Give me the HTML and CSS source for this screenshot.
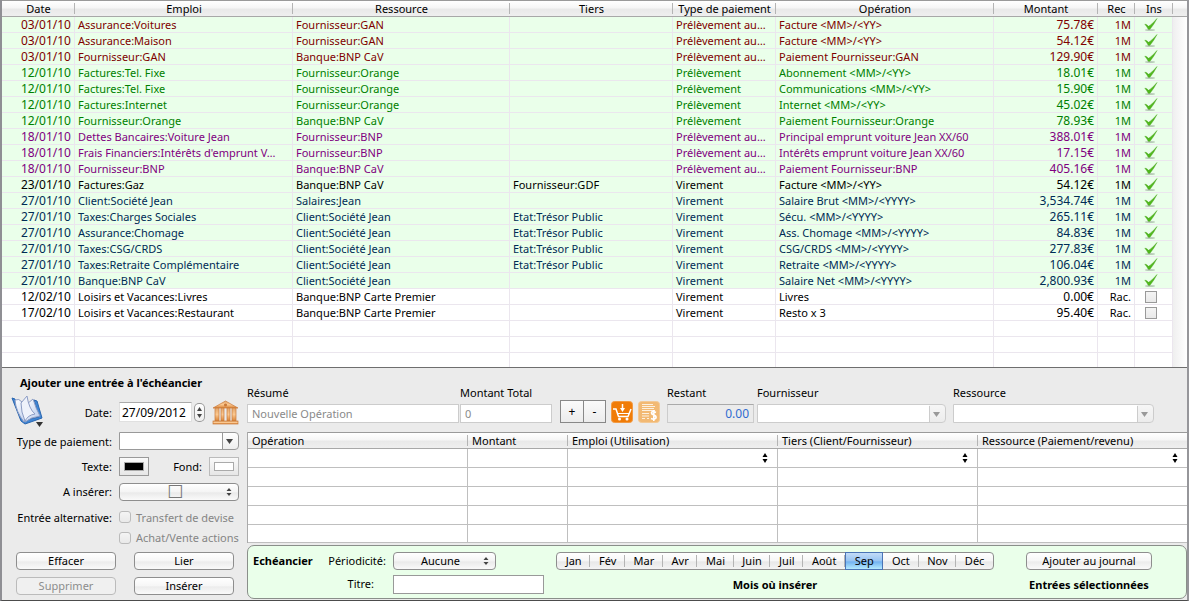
FILE: index.html
```html
<!DOCTYPE html>
<html lang="fr">
<head>
    <meta charset="UTF-8">
    <meta name="viewport" content="width=device-width, initial-scale=1.0">
    <title>Echéancier</title>
    <link rel="stylesheet" href="styles.css">
</head>
<body>

    <main class="fenetre">

        <!-- Liste des échéances -->
        <div class="liste">
            <table class="echeances">
                <colgroup>
                    <col class="col-date">
                    <col class="col-emploi">
                    <col class="col-ressource">
                    <col class="col-tiers">
                    <col class="col-type">
                    <col>
                    <col class="col-montant">
                    <col class="col-rec">
                    <col class="col-ins">
                    <col class="col-fin">
                </colgroup>
                <thead>
                    <tr>
                        <th>Date</th>
                        <th>Emploi</th>
                        <th>Ressource</th>
                        <th>Tiers</th>
                        <th>Type de paiement</th>
                        <th>Opération</th>
                        <th>Montant</th>
                        <th>Rec</th>
                        <th>Ins</th>
                        <th></th>
                    </tr>
                </thead>
                <tbody id="lignes"></tbody>
            </table>
        </div>

        <section class="panneau">

            <!-- Formulaire de gauche -->
            <form class="saisie">
                <h2>Ajouter une entrée à l'échéancier</h2>

                <div class="champ champ-date">
                    <div class="etiquette avec-livre">
                        <button type="button" class="icone" aria-label="Modèles">
                            <svg width="34" height="34" viewBox="0 0 34 34">
                                <defs>
                                    <linearGradient id="page" x1="0" y1="0" x2="1" y2="1">
                                        <stop offset="0" stop-color="#ffffff"/>
                                        <stop offset="1" stop-color="#b4c8ec"/>
                                    </linearGradient>
                                </defs>
                                <path d="M1 3 L4 4 L14 25 L28 22 L23 5 L26 6 L31 23 L14 29 L10 26 Z" fill="#3f86d4" stroke="#2a66b0" stroke-width="1"/>
                                <path d="M4 5 Q8 3 11 7 L19 23 Q15 23 13 27 Q5 17 4 5 Z" fill="url(#page)" stroke="#8c9cc4" stroke-width="1"/>
                                <path d="M16 9 L22 4 Q25 14 29 21 Q20 22 14 27 Z" fill="url(#page)" stroke="#8c9cc4" stroke-width="1"/>
                                <path d="M10 8 L16 1 Q18 14 24 19 Q17 20 14 26 Q10 17 10 8 Z" fill="#eef2fb" stroke="#8c9cc4" stroke-width="1"/>
                                <path d="M25 27 h7 l-3.500 5 z" fill="#333"/>
                            </svg>
                        </button>
                        <label for="date">Date:</label>
                    </div>
                    <input type="text" id="date" class="date" value="27/09/2012">
                    <button type="button" class="pas" aria-label="Changer la date">
                        <svg width="11" height="19" viewBox="0 0 11 19"><path d="M5.500 4 L8 8 H3 Z M5.500 15 L8 11 H3 Z" fill="#444"/></svg>
                    </button>
                    <button type="button" class="icone banque" aria-label="Banque">
                        <svg width="27" height="25" viewBox="0 0 27 25">
                            <defs>
                                <linearGradient id="pierre" x1="0" y1="0" x2="0" y2="1">
                                    <stop offset="0" stop-color="#e2a56a"/>
                                    <stop offset="0.500" stop-color="#fbc890"/>
                                    <stop offset="1" stop-color="#d98336"/>
                                </linearGradient>
                            </defs>
                            <g fill="url(#pierre)" stroke="#c9793a" stroke-width="0.700">
                                <path d="M1 8 L13.500 1 L26 8 Z"/>
                                <rect x="3" y="8" width="4" height="13"/>
                                <rect x="9" y="8" width="3" height="13"/>
                                <rect x="15" y="8" width="3" height="13"/>
                                <rect x="20" y="8" width="4" height="13"/>
                                <rect x="1" y="21" width="25" height="3"/>
                            </g>
                            <circle cx="13.500" cy="5" r="1.500" fill="#c9793a"/>
                        </svg>
                    </button>
                </div>

                <div class="champ champ-type">
                    <label class="etiquette" for="type">Type de paiement:</label>
                    <select id="type" class="combo"><option></option></select>
                </div>

                <div class="champ champ-couleur">
                    <label class="etiquette" for="texte">Texte:</label>
                    <input type="color" id="texte" class="couleur" value="#000000">
                    <label class="fond" for="fond">Fond:</label>
                    <input type="color" id="fond" class="couleur couleur-pale" value="#ffffff">
                </div>

                <div class="champ champ-inserer">
                    <label class="etiquette" for="inserer">A insérer:</label>
                    <select id="inserer" class="liste-choix case-choix"><option>☐</option></select>
                </div>

                <div class="champ champ-option">
                    <span class="etiquette">Entrée alternative:</span>
                    <input type="checkbox" id="devise" class="case" disabled>
                    <label class="inactif" for="devise">Transfert de devise</label>
                </div>

                <div class="champ champ-option2">
                    <span class="etiquette"></span>
                    <input type="checkbox" id="actions" class="case" disabled>
                    <label class="inactif" for="actions">Achat/Vente actions</label>
                </div>

                <div class="boutons">
                    <button type="button" class="bouton">Effacer</button>
                    <button type="button" class="bouton">Lier</button>
                    <button type="button" class="bouton" disabled>Supprimer</button>
                    <button type="button" class="bouton">Insérer</button>
                </div>
            </form>

            <!-- Détail de l'opération -->
            <div class="detail">
                <div class="entete">
                    <div class="bloc bloc-resume">
                        <label for="resume">Résumé</label>
                        <input type="text" id="resume" class="texte" placeholder="Nouvelle Opération">
                    </div>
                    <div class="bloc bloc-total">
                        <label for="total">Montant Total</label>
                        <input type="text" id="total" class="texte" placeholder="0">
                    </div>
                    <div class="plus-moins">
                        <button type="button">+</button>
                        <button type="button">-</button>
                    </div>
                    <div class="raccourcis">
                        <button type="button" class="icone" aria-label="Achat">
                            <svg width="22" height="22" viewBox="0 0 22 22">
                                <rect x="0.500" y="0.500" width="21" height="21" rx="3" fill="#f07c08" stroke="#f29a42"/>
                                <path d="M2 8 H5 L7.500 15.500 H17 L20 8" fill="none" stroke="#fff" stroke-width="1.500"/>
                                <path d="M6.500 12.500 H18" stroke="#fff" stroke-width="1"/>
                                <path d="M11.500 3 V8" stroke="#fff" stroke-width="1.500"/>
                                <path d="M9 7 H14 L11.500 11 Z" fill="#fff"/>
                                <circle cx="8.500" cy="18" r="1.500" fill="#fff"/>
                                <circle cx="16" cy="18" r="1.500" fill="#fff"/>
                            </svg>
                        </button>
                        <button type="button" class="icone" aria-label="Facture" disabled>
                            <svg width="22" height="22" viewBox="0 0 22 22">
                                <rect x="0.500" y="0.500" width="21" height="21" rx="3" fill="#f2b973" stroke="#f3c995"/>
                                <path d="M4 3.500 H15 M4 5.500 H17 M4 7.500 H16 M4 9.500 H17 M4 12.500 H11 M4 15 H11 M4 17.500 H7 M9 17.500 H11" stroke="#fdf0de" stroke-width="1"/>
                                <path d="M18 11.500 Q14 9.500 13.500 11.500 Q13.500 13.500 16 14 Q18.500 15 18 17 Q16.500 19 13 17.500 M15.800 9 V20" fill="none" stroke="#fff" stroke-width="1.600"/>
                            </svg>
                        </button>
                    </div>
                    <div class="bloc bloc-restant">
                        <label for="restant">Restant</label>
                        <input type="text" id="restant" class="texte restant" value="0.00" readonly>
                    </div>
                    <div class="bloc bloc-fournisseur">
                        <label for="fournisseur">Fournisseur</label>
                        <select id="fournisseur" class="combo" disabled><option></option></select>
                    </div>
                    <div class="bloc bloc-ressource">
                        <label for="ressource">Ressource</label>
                        <select id="ressource" class="combo" disabled><option></option></select>
                    </div>
                </div>

                <table class="operations">
                    <colgroup>
                        <col class="op-nom">
                        <col class="op-montant">
                        <col>
                        <col class="op-tiers">
                        <col class="op-ressource">
                    </colgroup>
                    <thead>
                        <tr>
                            <th>Opération</th>
                            <th>Montant</th>
                            <th>Emploi (Utilisation)</th>
                            <th>Tiers (Client/Fournisseur)</th>
                            <th>Ressource (Paiement/revenu)</th>
                        </tr>
                    </thead>
                    <tbody>
                        <tr>
                            <td></td>
                            <td></td>
                            <td><select class="cellule" aria-label="Emploi"><option></option></select></td>
                            <td><select class="cellule" aria-label="Tiers"><option></option></select></td>
                            <td><select class="cellule" aria-label="Ressource"><option></option></select></td>
                        </tr>
                        <tr><td></td><td></td><td></td><td></td><td></td></tr>
                        <tr><td></td><td></td><td></td><td></td><td></td></tr>
                        <tr><td></td><td></td><td></td><td></td><td></td></tr>
                        <tr><td></td><td></td><td></td><td></td><td></td></tr>
                    </tbody>
                </table>

                <!-- Périodicité et mois -->
                <div class="planning">
                    <h3>Echéancier</h3>
                    <div class="periode">
                        <label for="periodicite">Périodicité:</label>
                        <select id="periodicite" class="liste-choix"><option>Aucune</option></select>
                        <label class="label-titre" for="titre">Titre:</label>
                        <input type="text" id="titre" class="texte titre">
                    </div>
                    <div class="groupe-mois">
                        <div class="mois" id="mois"></div>
                        <strong>Mois où insérer</strong>
                    </div>
                    <div class="journal">
                        <button type="button" class="bouton">Ajouter au journal</button>
                        <strong>Entrées sélectionnées</strong>
                    </div>
                </div>
            </div>
        </section>
    </main>

    <script>
        // date, emploi, ressource, tiers, type, opération, montant, récurrence, couleur
        const echeances = [
            ['03/01/10', 'Assurance:Voitures', 'Fournisseur:GAN', '', 'Prélèvement au…', 'Facture <MM>/<YY>', '75.78€', '1M', 'rouge'],
            ['03/01/10', 'Assurance:Maison', 'Fournisseur:GAN', '', 'Prélèvement au…', 'Facture <MM>/<YY>', '54.12€', '1M', 'rouge'],
            ['03/01/10', 'Fournisseur:GAN', 'Banque:BNP CaV', '', 'Prélèvement au…', 'Paiement Fournisseur:GAN', '129.90€', '1M', 'rouge'],
            ['12/01/10', 'Factures:Tel. Fixe', 'Fournisseur:Orange', '', 'Prélèvement', 'Abonnement <MM>/<YY>', '18.01€', '1M', 'vert'],
            ['12/01/10', 'Factures:Tel. Fixe', 'Fournisseur:Orange', '', 'Prélèvement', 'Communications <MM>/<YY>', '15.90€', '1M', 'vert'],
            ['12/01/10', 'Factures:Internet', 'Fournisseur:Orange', '', 'Prélèvement', 'Internet <MM>/<YY>', '45.02€', '1M', 'vert'],
            ['12/01/10', 'Fournisseur:Orange', 'Banque:BNP CaV', '', 'Prélèvement', 'Paiement Fournisseur:Orange', '78.93€', '1M', 'vert'],
            ['18/01/10', 'Dettes Bancaires:Voiture Jean', 'Fournisseur:BNP', '', 'Prélèvement au…', 'Principal emprunt voiture Jean XX/60', '388.01€', '1M', 'violet'],
            ['18/01/10', "Frais Financiers:Intérêts d'emprunt V…", 'Fournisseur:BNP', '', 'Prélèvement au…', 'Intérêts emprunt voiture Jean XX/60', '17.15€', '1M', 'violet'],
            ['18/01/10', 'Fournisseur:BNP', 'Banque:BNP CaV', '', 'Prélèvement au…', 'Paiement Fournisseur:BNP', '405.16€', '1M', 'violet'],
            ['23/01/10', 'Factures:Gaz', 'Banque:BNP CaV', 'Fournisseur:GDF', 'Virement', 'Facture <MM>/<YY>', '54.12€', '1M', 'noir'],
            ['27/01/10', 'Client:Société Jean', 'Salaires:Jean', '', 'Virement', 'Salaire Brut <MM>/<YYYY>', '3,534.74€', '1M', 'bleu'],
            ['27/01/10', 'Taxes:Charges Sociales', 'Client:Société Jean', 'Etat:Trésor Public', 'Virement', 'Sécu. <MM>/<YYYY>', '265.11€', '1M', 'bleu'],
            ['27/01/10', 'Assurance:Chomage', 'Client:Société Jean', 'Etat:Trésor Public', 'Virement', 'Ass. Chomage <MM>/<YYYY>', '84.83€', '1M', 'bleu'],
            ['27/01/10', 'Taxes:CSG/CRDS', 'Client:Société Jean', 'Etat:Trésor Public', 'Virement', 'CSG/CRDS <MM>/<YYYY>', '277.83€', '1M', 'bleu'],
            ['27/01/10', 'Taxes:Retraite Complémentaire', 'Client:Société Jean', 'Etat:Trésor Public', 'Virement', 'Retraite <MM>/<YYYY>', '106.04€', '1M', 'bleu'],
            ['27/01/10', 'Banque:BNP CaV', 'Client:Société Jean', '', 'Virement', 'Salaire Net <MM>/<YYYY>', '2,800.93€', '1M', 'bleu'],
            ['12/02/10', 'Loisirs et Vacances:Livres', 'Banque:BNP Carte Premier', '', 'Virement', 'Livres', '0.00€', 'Rac.', 'noir'],
            ['17/02/10', 'Loisirs et Vacances:Restaurant', 'Banque:BNP Carte Premier', '', 'Virement', 'Resto x 3', '95.40€', 'Rac.', 'noir']
        ];

        const coche = `
            <svg class="coche" width="14" height="13" viewBox="0 0 14 13">
                <ellipse cx="6" cy="12" rx="5" ry="1" fill="#b9ccb9"/>
                <path d="M0.800 6.200 Q2.500 5.800 4.500 8.300 Q8 6.500 13 0.500 Q10 6.500 6 11.300 H4.200 Q3 8.500 0.800 6.200 Z" fill="#4fb81c" stroke="#3fa012" stroke-width="0.400"/>
            </svg>`;

        // Remplir la liste
        const corps = document.getElementById('lignes');
        echeances.forEach(e => {
            const ligne = corps.insertRow();
            const inseree = e[7] === '1M';
            ligne.className = e[8] + (inseree ? ' inseree' : '');
            e.slice(0, 8).forEach((valeur, i) => {
                const cellule = ligne.insertCell();
                cellule.textContent = valeur;
                if (i === 0 || i === 6) cellule.className = 'nombre';
                if (i === 7) cellule.className = 'rec';
            });
            const ins = ligne.insertCell();
            ins.className = 'ins';
            ins.innerHTML = inseree ? coche : '<input type="checkbox" class="case case-carree" aria-label="Insérer">';
            ligne.insertCell().className = 'gouttiere';
        });

        // Lignes vides en bas de la liste
        for (let i = 0; i < 3; i++) {
            const ligne = corps.insertRow();
            for (let j = 0; j < 9; j++) ligne.insertCell();
            ligne.insertCell().className = 'gouttiere';
        }

        // Boutons des mois
        const mois = document.getElementById('mois');
        ['Jan', 'Fév', 'Mar', 'Avr', 'Mai', 'Juin', 'Juil', 'Août', 'Sep', 'Oct', 'Nov', 'Déc'].forEach(nom => {
            const bouton = document.createElement('button');
            bouton.type = 'button';
            bouton.textContent = nom;
            if (nom === 'Sep') bouton.className = 'actif';
            bouton.addEventListener('click', () => bouton.classList.toggle('actif'));
            mois.appendChild(bouton);
        });
    </script>

</body>
</html>
```
FILE: styles.css
```css
* {
    box-sizing: border-box;
}

body {
    margin: 0;
    font-family: "Noto Sans", "Open Sans", sans-serif;
    font-size: 11px;
    line-height: 15px;
    color: #000;
    background-color: #ebebeb;
}

button, input, select {
    font: inherit;
    color: inherit;
    margin: 0;
    padding: 0;
}

h2, h3 {
    margin: 0;
    font-size: 11px;
}

.fenetre {
    display: flex;
    flex-direction: column;
    height: 100vh;
    border-left: 2px solid #8f8f94;
    border-right: 2px solid #96969a;
    border-bottom: 1px solid #4c4c4c;
}

/* Liste des échéances */
.liste {
    flex: 1;
    min-height: 0;
    overflow: hidden;
    background-color: #fff;
    border-bottom: 1px solid #6e6e6e;
}

table {
    width: 100%;
    table-layout: fixed;
    border-collapse: separate;
    border-spacing: 0;
}

th {
    height: 17px;
    padding: 0 4px;
    font-weight: normal;
    line-height: 14px;
    white-space: nowrap;
    border-top: 1px solid #9a9a9a;
    border-bottom: 1px solid #a8a8a8;
    background:
        linear-gradient(#b4b4b4, #b4b4b4) right center / 1px 11px no-repeat,
        linear-gradient(#fff, #f6f6f6 45%, #e9e9e9 55%, #efefef);
}

th:last-child {
    background: linear-gradient(#fff, #f6f6f6 45%, #e9e9e9 55%, #efefef);
}

.echeances td {
    height: 16px;
    padding: 0 3px;
    line-height: 15px;
    white-space: nowrap;
    overflow: hidden;
    text-overflow: ellipsis;
    border-right: 1px solid #ebe6ee;
    border-bottom: 1px solid #ebe6ee;
}

.col-date { width: 73px; }
.col-emploi { width: 218px; }
.col-ressource { width: 217px; }
.col-tiers { width: 163px; }
.col-type { width: 103px; }
.col-montant { width: 104px; }
.col-rec { width: 37px; }
.col-ins { width: 38px; }
.col-fin { width: 14px; }

.inseree td { background-color: #eaffea; }
.rouge { color: #800000; }
.vert { color: #008000; }
.violet { color: #800080; }
.bleu { color: #002b55; }

.echeances .nombre {
    font-size: 12px;
    text-align: right;
}

.echeances .rec {
    text-align: right;
}

.echeances .ins {
    padding: 0 6px 0 0;
    text-align: center;
    line-height: 0;
}

.coche {
    vertical-align: middle;
}

.echeances .gouttiere {
    border: none;
    padding: 0;
    background: linear-gradient(to right, #efefef, #fff);
}

/* Cases à cocher */
.case {
    appearance: none;
    flex: none;
    width: 12px;
    height: 12px;
    border: 1px solid #bbb;
    border-radius: 3px;
    background: linear-gradient(#f4f4f4, #e9e9e9);
    vertical-align: middle;
}

.case-carree {
    border-color: #999;
    border-radius: 0;
}

.inactif {
    margin-left: 5px;
    color: #858585;
    white-space: nowrap;
}

/* Panneau du bas */
.panneau {
    display: flex;
}

.saisie {
    width: 245px;
    flex: none;
}

.saisie h2 {
    padding: 7px 0 7px 18px;
}

.champ {
    display: flex;
    align-items: center;
}

.champ-date { height: 30px; }
.champ-type { height: 28px; }
.champ-couleur { height: 22px; }
.champ-inserer { height: 29px; }
.champ-option { height: 22px; }
.champ-option2 { height: 19px; }

.etiquette {
    flex: none;
    width: 110px;
    margin-right: 7px;
    text-align: right;
    white-space: nowrap;
}

.avec-livre {
    display: flex;
    align-items: center;
    justify-content: space-between;
    padding-left: 9px;
}

.icone {
    display: block;
    border: none;
    background: none;
    line-height: 0;
}

.banque {
    margin-left: 7px;
}

.date {
    width: 73px;
    height: 20px;
    padding-left: 2px;
    border: 1px solid #e0e0e0;
    border-top-color: #aaa;
    background-color: #fff;
    font-size: 12px;
}

.pas {
    width: 11px;
    height: 19px;
    margin-left: 2px;
    border: none;
    border-radius: 5px;
    box-shadow: inset 0 0 0 1px #999;
    background: linear-gradient(#fff, #eee);
    line-height: 0;
}

.combo {
    appearance: none;
    width: 120px;
    height: 18px;
    border: 1px solid #999;
    border-radius: 0 4px 4px 0;
    background:
        url("data:image/svg+xml,%3Csvg xmlns='http://www.w3.org/2000/svg' width='16' height='16'%3E%3Cpath d='M0 0V16' stroke='%23999' stroke-width='2'/%3E%3Cpath d='M4 6h7l-3.5 5z' fill='%23444'/%3E%3C/svg%3E") right center no-repeat,
        linear-gradient(#fff, #eee) right / 16px 100% no-repeat,
        #fff;
}

.combo:disabled {
    opacity: 1;
    border-color: #ccc;
    background:
        url("data:image/svg+xml,%3Csvg xmlns='http://www.w3.org/2000/svg' width='16' height='16'%3E%3Cpath d='M0 0V16' stroke='%23ccc' stroke-width='2'/%3E%3Cpath d='M4 6h7l-3.5 5z' fill='%23999'/%3E%3C/svg%3E") right center no-repeat,
        linear-gradient(#f6f6f6, #ececec) right / 16px 100% no-repeat,
        #fff;
}

.couleur {
    appearance: none;
    width: 30px;
    height: 19px;
    padding: 4px;
    border: 1px solid #999;
    background: linear-gradient(#fafafa, #e6e6e6);
}

.couleur::-webkit-color-swatch-wrapper {
    padding: 0;
}

.couleur::-webkit-color-swatch {
    border: 1px solid #aaa;
    border-radius: 0;
}

.couleur-pale {
    border-color: #bbb;
}

.fond {
    width: 53px;
    margin-right: 7px;
    text-align: right;
}

.liste-choix {
    appearance: none;
    width: 103px;
    height: 18px;
    padding-right: 8px;
    border: 1px solid #8e8e8e;
    border-radius: 4px;
    text-align: center;
    text-align-last: center;
    line-height: 16px;
    background:
        url("data:image/svg+xml,%3Csvg xmlns='http://www.w3.org/2000/svg' width='6' height='10'%3E%3Cpath d='M3 1L5.5 4H.5zM3 9L5.5 6H.5z' fill='%23444'/%3E%3C/svg%3E") right 6px center no-repeat,
        linear-gradient(#fff, #f4f4f4 50%, #eaeaea 55%, #fafafa);
}

.case-choix {
    width: 120px;
    font-family: "DejaVu Sans", sans-serif;
    font-size: 18px;
    color: #777;
}

.boutons {
    display: grid;
    grid-template-columns: 1fr 1fr;
    gap: 7px 18px;
    padding: 5px 13px 4px 14px;
}

.bouton {
    height: 18px;
    border: 1px solid #8e8e8e;
    border-radius: 4px;
    line-height: 16px;
    background: linear-gradient(#fff, #f6f6f6 50%, #ececec 55%, #fafafa);
}

.bouton:disabled {
    color: #8c8c8c;
    border-color: #bbb;
    background: #f0f0f0;
}

/* Partie droite */
.detail {
    flex: 1;
    min-width: 0;
}

.entete {
    display: flex;
    align-items: flex-end;
    padding: 17px 33px 9px 0;
}

.bloc {
    display: flex;
    flex-direction: column;
    gap: 4px;
}

.bloc .combo {
    width: 100%;
    height: 19px;
}

.bloc-resume {
    flex: 1;
    min-width: 0;
    margin-right: 1px;
}

.bloc-total { width: 92px; }
.bloc-restant { width: 87px; margin-right: 3px; }
.bloc-fournisseur { width: 189px; margin-right: 7px; }
.bloc-ressource { width: 201px; }

.texte {
    width: 100%;
    height: 19px;
    padding: 0 4px;
    border: 1px solid #ccc;
    background-color: #fff;
}

.texte::placeholder {
    color: #8a8a8a;
}

.restant {
    background-color: #ebebeb;
    color: #2f6bd0;
    font-size: 12px;
    text-align: right;
    border-top-color: #aaa;
}

.plus-moins {
    display: flex;
    margin: 0 5px 0 8px;
    border: 1px solid #888;
}

.plus-moins button {
    width: 22px;
    height: 21px;
    border: none;
    font-size: 12px;
    background: linear-gradient(#fafafa, #ececec);
}

.plus-moins button + button {
    border-left: 1px solid #888;
}

.raccourcis {
    display: flex;
    gap: 5px;
    margin-right: 7px;
}

/* Tableau des opérations */
.operations {
    border-left: 1px solid #aaa;
    background-color: #fff;
}

.operations th {
    text-align: left;
}

.operations td {
    height: 19px;
    padding: 0;
    line-height: 0;
    border-right: 1px solid #bfbfbf;
    border-bottom: 1px solid #bfbfbf;
}

.operations td:last-child {
    border-right: none;
}

.operations tr:last-child td {
    height: 18px;
}

.op-nom { width: 220px; }
.op-montant { width: 100px; }
.op-tiers { width: 200px; }
.op-ressource { width: 209px; }

.cellule {
    appearance: none;
    width: 100%;
    height: 18px;
    border: none;
    background: url("data:image/svg+xml,%3Csvg xmlns='http://www.w3.org/2000/svg' width='6' height='12'%3E%3Cpath d='M3 1L5.5 5H.5zM3 11L5.5 7H.5z' fill='%23000'/%3E%3C/svg%3E") right 9px center no-repeat;
}

/* Cadre vert de l'échéancier */
.planning {
    display: flex;
    margin: 2px 0 1px;
    padding: 6px 34px 4px 5px;
    border: 1px solid #8a8f8a;
    border-radius: 7px;
    background-color: #eaffea;
}

.planning h3 {
    width: 66px;
    line-height: 18px;
}

.periode {
    display: grid;
    grid-template-columns: 67px 151px;
    grid-template-rows: 18px 19px;
    gap: 5px 7px;
    line-height: 18px;
    text-align: right;
}

.label-titre {
    padding-right: 12px;
}

.titre {
    border-color: #999;
}

.groupe-mois {
    display: flex;
    flex-direction: column;
    align-items: center;
    gap: 7px;
    flex: 1;
    margin: 0 32px 0 12px;
}

.mois {
    display: flex;
    width: 100%;
    height: 18px;
    border: 1px solid #8e8e8e;
    border-radius: 4px;
    background: linear-gradient(#fff, #f6f6f6 50%, #e8e8e8 55%, #f4f4f4);
}

.mois button {
    flex: 1 1 auto;
    border: none;
    line-height: 16px;
    background: linear-gradient(#b4b4b4, #b4b4b4) right center / 1px 12px no-repeat;
}

.mois button:last-child {
    background: none;
}

.mois .actif {
    margin: -1px 0;
    border: 1px solid #4a74b5;
    background: linear-gradient(#c3dcf8, #96c3f2 50%, #72b2f0 55%, #b5eaff);
}

.journal {
    display: flex;
    flex-direction: column;
    gap: 7px;
    width: 126px;
    white-space: nowrap;
}

.journal strong {
    text-align: center;
}
```
